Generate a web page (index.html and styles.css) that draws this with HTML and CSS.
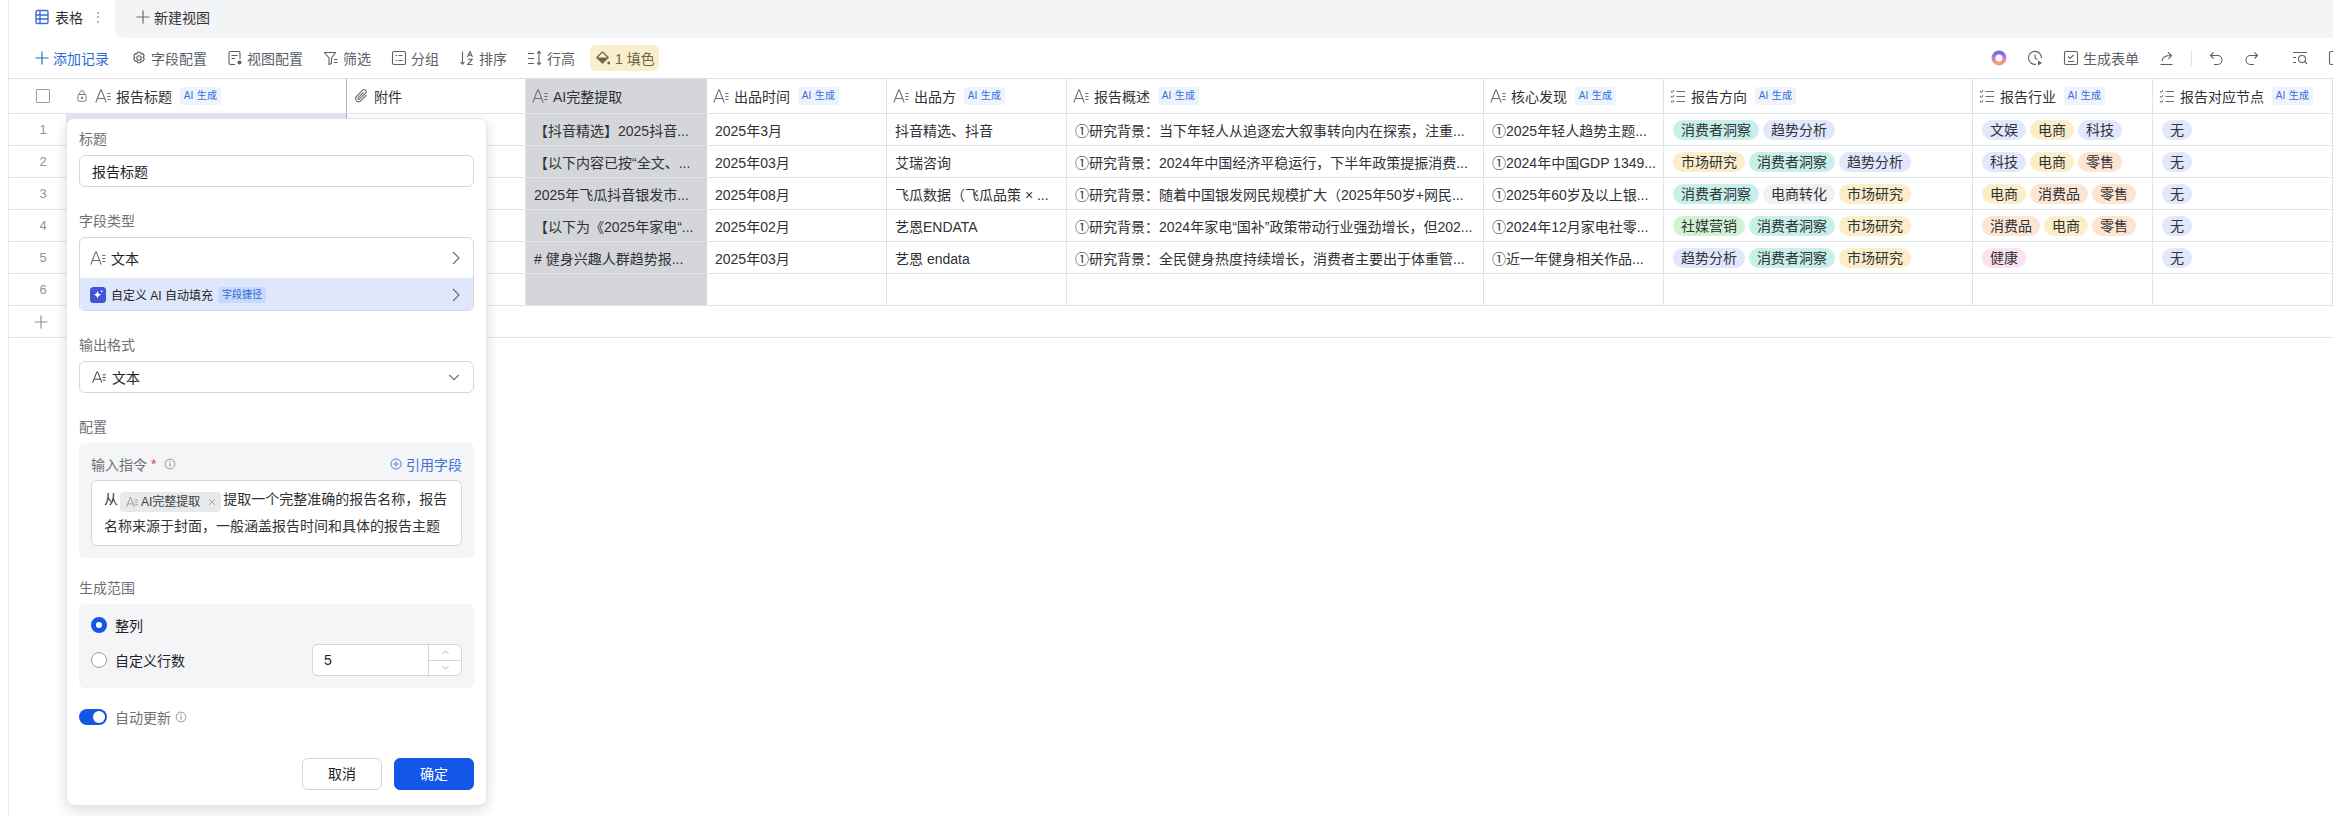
FILE: index.html
```html
<!DOCTYPE html>
<html lang="zh-CN">
<head>
<meta charset="utf-8">
<title>表格</title>
<link rel="stylesheet" href="styles.css">
</head>
<body>
<svg class="defs" xmlns="http://www.w3.org/2000/svg">
  <symbol id="i-text" viewBox="0 0 16 16"><path d="M.8 14.500 5.600 2h.8l4.800 12.500M2.600 10.500h6.800M12.300 5.500h3.200M12.300 8.500h3.200M12.300 11.500h3.200" fill="none" stroke="currentColor" stroke-width="1.100"/></symbol>
  <symbol id="i-multi" viewBox="0 0 16 16"><path d="M6.500 3.500H15M6.500 8.500H15M6.500 13.500H15" fill="none" stroke="currentColor" stroke-width="1.100"/><path d="M1 3.200l1.200 1.200L4.200 2.300M1 8.200l1.200 1.200 2-2.100M1 13.200l1.200 1.200 2-2.100" fill="none" stroke="currentColor" stroke-width="1.100" stroke-dasharray="1.800 .8"/></symbol>
  <symbol id="i-grid" viewBox="0 0 16 16"><rect x="2" y="1.500" width="12" height="13" rx="1.500" fill="none" stroke="currentColor" stroke-width="1.400"/><path d="M6 2v12M2 6h12M2 10h12" stroke="currentColor" stroke-width="1.400"/></symbol>
  <symbol id="i-plus" viewBox="0 0 16 16"><path d="M8 1.500v13M1.500 8h13" stroke="currentColor" stroke-width="1.200" fill="none"/></symbol>
  <symbol id="i-gear" viewBox="0 0 16 16"><path d="M6.600 1.500h2.800l.7 1.700 1.800-.3 1.400 2.400-1.100 1.400 1.100 1.500-1.400 2.400-1.800-.3-.7 1.700H6.600l-.7-1.700-1.800.3-1.400-2.400 1.100-1.500-1.100-1.400 1.400-2.400 1.800.3z" fill="none" stroke="currentColor" stroke-width="1.100" stroke-linejoin="round" transform="translate(0 .7)"/><circle cx="8" cy="8" r="2.200" fill="none" stroke="currentColor" stroke-width="1.100"/></symbol>
  <symbol id="i-view" viewBox="0 0 16 16"><path d="M8 14.500H3.500A1.500 1.500 0 0 1 2 13V3A1.500 1.500 0 0 1 3.500 1.500h8A1.500 1.500 0 0 1 13 3v6M4.500 5.500h6M4.500 8.500h3.500" fill="none" stroke="currentColor" stroke-width="1.100"/><circle cx="12.500" cy="12.500" r="2" fill="currentColor"/></symbol>
  <symbol id="i-filter" viewBox="0 0 16 16"><path d="M1.500 2.500h11L8.500 8v5.500L6 14.500V8zM11 9.500h3.500M11 12.500h3.500" fill="none" stroke="currentColor" stroke-width="1.100" stroke-linejoin="round"/></symbol>
  <symbol id="i-group" viewBox="0 0 16 16"><rect x="1.500" y="1.500" width="13" height="13" rx="1.500" fill="none" stroke="currentColor" stroke-width="1.100"/><path d="M4.500 5.500h1.500M7.500 5.500h4M4.500 10.500h1.500M7.500 10.500h4" fill="none" stroke="currentColor" stroke-width="1.100"/></symbol>
  <symbol id="i-sort" viewBox="0 0 16 16"><path d="M3.500 1.500v12.500M1.500 12l2 2.200 2-2.200M8.500 7l2.500-5.500L13.500 7M9.300 5.300h3.400M8.800 9.200h4.400L8.800 14.500h4.700" fill="none" stroke="currentColor" stroke-width="1.100"/></symbol>
  <symbol id="i-height" viewBox="0 0 16 16"><path d="M1 3.500h6M1 8.500h6M1 13.500h6M12 1.500v13M10 3.500l2-2.200 2 2.200M10 12.500l2 2.200 2-2.200" fill="none" stroke="currentColor" stroke-width="1.100"/></symbol>
  <symbol id="i-fill" viewBox="0 0 16 16"><path d="M7.500 1.800 13.200 7.500 7.500 13.200 1.800 7.500z" fill="none" stroke="currentColor" stroke-width="1.200" stroke-linejoin="round"/><path d="M2.500 7.500h10l-5 5z" fill="currentColor"/><circle cx="13.800" cy="13" r="1.400" fill="currentColor"/></symbol>
  <symbol id="i-clock" viewBox="0 0 16 16"><path d="M9 14.300A6.500 6.500 0 1 1 14.500 8M8 4.500V8l2.500 1.500" fill="none" stroke="currentColor" stroke-width="1.100"/><path d="M11 10.500l4 2.500-4 2.500z" fill="currentColor"/></symbol>
  <symbol id="i-form" viewBox="0 0 16 16"><rect x="1.500" y="1.500" width="13" height="13" rx="1.500" fill="none" stroke="currentColor" stroke-width="1.100"/><path d="M5 6.500l2 2 3.500-3.500M5 11.500h6" fill="none" stroke="currentColor" stroke-width="1.100"/></symbol>
  <symbol id="i-share" viewBox="0 0 16 16"><path d="M1.500 14.500h12M3 11c.5-3.500 3-5.500 8.500-5.500M9 2.500l3.500 3-3 3.500" fill="none" stroke="currentColor" stroke-width="1.100"/></symbol>
  <symbol id="i-undo" viewBox="0 0 16 16"><path d="M3 5.500h6.500a4.500 4.500 0 0 1 0 9H6M5.500 2.300 2.500 5.500l3 3" fill="none" stroke="currentColor" stroke-width="1.100"/></symbol>
  <symbol id="i-redo" viewBox="0 0 16 16"><path d="M13 5.500H6.500a4.500 4.500 0 0 0 0 9H10M10.500 2.300l3 3.200-3 3" fill="none" stroke="currentColor" stroke-width="1.100"/></symbol>
  <symbol id="i-search" viewBox="0 0 16 16"><path d="M1 2.500h14M1 7.500h3M1 12.500h3" fill="none" stroke="currentColor" stroke-width="1.100"/><circle cx="10" cy="9" r="3.500" fill="none" stroke="currentColor" stroke-width="1.100"/><path d="M12.500 11.500l2.500 2.500" stroke="currentColor" stroke-width="1.100"/></symbol>
  <symbol id="i-lock" viewBox="0 0 16 16"><rect x="2.500" y="6" width="11" height="9" rx="1.500" fill="none" stroke="currentColor" stroke-width="1.200"/><path d="M5 6V4a3 3 0 0 1 6 0v2" fill="none" stroke="currentColor" stroke-width="1.200"/><circle cx="8" cy="10.500" r="1.500" fill="currentColor"/></symbol>
  <symbol id="i-clip" viewBox="0 0 16 16"><path d="M13.500 7 7.800 12.800a3 3 0 0 1-4.300-4.300L9.700 2.200a2 2 0 0 1 2.900 2.900L6.500 11.200a1 1 0 0 1-1.400-1.400L10.500 4.500" fill="none" stroke="currentColor" stroke-width="1.100"/></symbol>
  <symbol id="i-right" viewBox="0 0 16 16"><path d="M5 2l6 6-6 6" fill="none" stroke="currentColor" stroke-width="1.100"/></symbol>
  <symbol id="i-down" viewBox="0 0 16 16"><path d="M2.500 5.500 8 11l5.500-5.500" fill="none" stroke="currentColor" stroke-width="1.300"/></symbol>
  <symbol id="i-info" viewBox="0 0 16 16"><circle cx="8" cy="8" r="6.500" fill="none" stroke="currentColor" stroke-width="1.100"/><path d="M8 7v4.500" stroke="currentColor" stroke-width="1.300"/><circle cx="8" cy="4.800" r=".9" fill="currentColor"/></symbol>
  <symbol id="i-add" viewBox="0 0 16 16"><circle cx="8" cy="8" r="6.800" fill="none" stroke="currentColor" stroke-width="1.200"/><path d="M8 4.500v7M4.500 8h7" stroke="currentColor" stroke-width="1.200"/></symbol>
  <symbol id="i-close" viewBox="0 0 12 12"><path d="M2.500 2.500l7 7M9.500 2.500l-7 7" stroke="currentColor" stroke-width="1.100" fill="none"/></symbol>
  <symbol id="i-spark" viewBox="0 0 16 16"><rect width="16" height="16" rx="3.500" fill="#4353d8"/><path d="M7.500 3.500c.4 2.600 1.400 3.700 4 4.200-2.600.5-3.600 1.600-4 4.300-.4-2.700-1.400-3.800-4-4.300 2.600-.5 3.600-1.600 4-4.200z" fill="#fff"/><circle cx="11.800" cy="4.300" r=".9" fill="#fff"/></symbol>
</svg>

<div class="app">
  <div class="tabs">
    <div class="tab-active">
      <svg class="icon icon-blue"><use href="#i-grid"/></svg>
      <span>表格</span>
      <span class="tab-dots">⋮</span>
    </div>
    <div class="tabs-rest">
      <svg class="icon icon-grey"><use href="#i-plus"/></svg>
      <span>新建视图</span>
    </div>
  </div>

  <div class="toolbar">
    <div class="tool tool-add"><svg class="icon"><use href="#i-plus"/></svg><span>添加记录</span></div>
    <div class="tool"><svg class="icon"><use href="#i-gear"/></svg><span>字段配置</span></div>
    <div class="tool"><svg class="icon"><use href="#i-view"/></svg><span>视图配置</span></div>
    <div class="tool"><svg class="icon"><use href="#i-filter"/></svg><span>筛选</span></div>
    <div class="tool"><svg class="icon"><use href="#i-group"/></svg><span>分组</span></div>
    <div class="tool"><svg class="icon"><use href="#i-sort"/></svg><span>排序</span></div>
    <div class="tool"><svg class="icon"><use href="#i-height"/></svg><span>行高</span></div>
    <div class="tool tool-fill"><svg class="icon"><use href="#i-fill"/></svg><span>1 填色</span></div>
    <div class="toolbar-right">
      <svg class="icon" viewBox="0 0 16 16">
        <defs><linearGradient id="ring" x1="0" y1="0" x2="0" y2="1"><stop offset="0" stop-color="#7668ee"/><stop offset=".55" stop-color="#c77fd0"/><stop offset="1" stop-color="#f4a36c"/></linearGradient></defs>
        <circle cx="8" cy="8" r="5.500" fill="none" stroke="url(#ring)" stroke-width="4"/>
      </svg>
      <svg class="icon"><use href="#i-clock"/></svg>
      <div class="tool"><svg class="icon"><use href="#i-form"/></svg><span>生成表单</span></div>
      <svg class="icon"><use href="#i-share"/></svg>
      <span class="tool-divider"></span>
      <svg class="icon"><use href="#i-undo"/></svg>
      <svg class="icon"><use href="#i-redo"/></svg>
      <svg class="icon tool-search"><use href="#i-search"/></svg>
      <svg class="icon"><use href="#i-form"/></svg>
    </div>
  </div>

  <div class="table">
    <div class="row row-head">
      <div class="cell idx"><span class="checkbox"></span></div>
      <div class="cell head first-col"><svg class="icon lock"><use href="#i-lock"/></svg><svg class="icon"><use href="#i-text"/></svg><span>报告标题</span><span class="ai-badge">AI 生成</span></div>
      <div class="cell head"><svg class="icon"><use href="#i-clip"/></svg><span>附件</span></div>
      <div class="cell head ai-col"><svg class="icon"><use href="#i-text"/></svg><span>AI完整提取</span></div>
      <div class="cell head"><svg class="icon"><use href="#i-text"/></svg><span>出品时间</span><span class="ai-badge">AI 生成</span></div>
      <div class="cell head"><svg class="icon"><use href="#i-text"/></svg><span>出品方</span><span class="ai-badge">AI 生成</span></div>
      <div class="cell head"><svg class="icon"><use href="#i-text"/></svg><span>报告概述</span><span class="ai-badge">AI 生成</span></div>
      <div class="cell head"><svg class="icon"><use href="#i-text"/></svg><span>核心发现</span><span class="ai-badge">AI 生成</span></div>
      <div class="cell head"><svg class="icon"><use href="#i-multi"/></svg><span>报告方向</span><span class="ai-badge">AI 生成</span></div>
      <div class="cell head"><svg class="icon"><use href="#i-multi"/></svg><span>报告行业</span><span class="ai-badge">AI 生成</span></div>
      <div class="cell head"><svg class="icon"><use href="#i-multi"/></svg><span>报告对应节点</span><span class="ai-badge">AI 生成</span></div>
    </div>

    <div class="row">
      <div class="cell idx">1</div>
      <div class="cell first-col selected"></div>
      <div class="cell"></div>
      <div class="cell ai-col">【抖音精选】2025抖音...</div>
      <div class="cell">2025年3月</div>
      <div class="cell">抖音精选、抖音</div>
      <div class="cell">①研究背景：当下年轻人从追逐宏大叙事转向内在探索，注重...</div>
      <div class="cell">①2025年轻人趋势主题...</div>
      <div class="cell tags"><span class="tag teal">消费者洞察</span><span class="tag blue">趋势分析</span></div>
      <div class="cell tags"><span class="tag blue">文娱</span><span class="tag yellow">电商</span><span class="tag blue">科技</span></div>
      <div class="cell tags"><span class="tag blue">无</span></div>
    </div>
    <div class="row">
      <div class="cell idx">2</div>
      <div class="cell first-col"></div>
      <div class="cell"></div>
      <div class="cell ai-col">【以下内容已按“全文、...</div>
      <div class="cell">2025年03月</div>
      <div class="cell">艾瑞咨询</div>
      <div class="cell">①研究背景：2024年中国经济平稳运行，下半年政策提振消费...</div>
      <div class="cell">①2024年中国GDP 1349...</div>
      <div class="cell tags"><span class="tag yellow">市场研究</span><span class="tag teal">消费者洞察</span><span class="tag blue">趋势分析</span></div>
      <div class="cell tags"><span class="tag blue">科技</span><span class="tag yellow">电商</span><span class="tag orange">零售</span></div>
      <div class="cell tags"><span class="tag blue">无</span></div>
    </div>
    <div class="row">
      <div class="cell idx">3</div>
      <div class="cell first-col"></div>
      <div class="cell"></div>
      <div class="cell ai-col">2025年飞瓜抖音银发市...</div>
      <div class="cell">2025年08月</div>
      <div class="cell">飞瓜数据（飞瓜品策 × ...</div>
      <div class="cell">①研究背景：随着中国银发网民规模扩大（2025年50岁+网民...</div>
      <div class="cell">①2025年60岁及以上银...</div>
      <div class="cell tags"><span class="tag teal">消费者洞察</span><span class="tag grey">电商转化</span><span class="tag yellow">市场研究</span></div>
      <div class="cell tags"><span class="tag yellow">电商</span><span class="tag orange">消费品</span><span class="tag orange">零售</span></div>
      <div class="cell tags"><span class="tag blue">无</span></div>
    </div>
    <div class="row">
      <div class="cell idx">4</div>
      <div class="cell first-col"></div>
      <div class="cell"></div>
      <div class="cell ai-col">【以下为《2025年家电“...</div>
      <div class="cell">2025年02月</div>
      <div class="cell">艺恩ENDATA</div>
      <div class="cell">①研究背景：2024年家电“国补”政策带动行业强劲增长，但202...</div>
      <div class="cell">①2024年12月家电社零...</div>
      <div class="cell tags"><span class="tag green">社媒营销</span><span class="tag teal">消费者洞察</span><span class="tag yellow">市场研究</span></div>
      <div class="cell tags"><span class="tag orange">消费品</span><span class="tag yellow">电商</span><span class="tag orange">零售</span></div>
      <div class="cell tags"><span class="tag blue">无</span></div>
    </div>
    <div class="row">
      <div class="cell idx">5</div>
      <div class="cell first-col"></div>
      <div class="cell"></div>
      <div class="cell ai-col"># 健身兴趣人群趋势报...</div>
      <div class="cell">2025年03月</div>
      <div class="cell">艺恩 endata</div>
      <div class="cell">①研究背景：全民健身热度持续增长，消费者主要出于体重管...</div>
      <div class="cell">①近一年健身相关作品...</div>
      <div class="cell tags"><span class="tag blue">趋势分析</span><span class="tag teal">消费者洞察</span><span class="tag yellow">市场研究</span></div>
      <div class="cell tags"><span class="tag pink">健康</span></div>
      <div class="cell tags"><span class="tag blue">无</span></div>
    </div>
    <div class="row">
      <div class="cell idx">6</div>
      <div class="cell first-col"></div>
      <div class="cell"></div>
      <div class="cell ai-col"></div>
      <div class="cell"></div>
      <div class="cell"></div>
      <div class="cell"></div>
      <div class="cell"></div>
      <div class="cell"></div>
      <div class="cell"></div>
      <div class="cell"></div>
    </div>
    <div class="add-row"><svg class="icon"><use href="#i-plus"/></svg></div>
  </div>

  <div class="popover">
    <div class="field-label">标题</div>
    <div class="input">报告标题</div>

    <div class="field-label section">字段类型</div>
    <div class="type-group">
      <div class="type-row">
        <svg class="icon"><use href="#i-text"/></svg>
        <span>文本</span>
        <svg class="icon chevron"><use href="#i-right"/></svg>
      </div>
      <div class="type-row type-ai">
        <svg class="icon"><use href="#i-spark"/></svg>
        <span>自定义 AI 自动填充</span>
        <span class="shortcut">字段捷径</span>
        <svg class="icon chevron"><use href="#i-right"/></svg>
      </div>
    </div>

    <div class="field-label section">输出格式</div>
    <div class="input select">
      <svg class="icon"><use href="#i-text"/></svg>
      <span>文本</span>
      <svg class="icon chevron"><use href="#i-down"/></svg>
    </div>

    <div class="field-label section">配置</div>
    <div class="panel panel-prompt">
      <div class="prompt-head">
        <span>输入指令</span>
        <span class="required">*</span>
        <svg class="icon"><use href="#i-info"/></svg>
        <span class="quote"><svg class="icon"><use href="#i-add"/></svg>引用字段</span>
      </div>
      <div class="prompt">从<span class="chip"><svg class="icon"><use href="#i-text"/></svg>AI完整提取<svg class="icon chip-x"><use href="#i-close"/></svg></span>提取一个完整准确的报告名称，报告名称来源于封面，一般涵盖报告时间和具体的报告主题</div>
    </div>

    <div class="field-label section-tight">生成范围</div>
    <div class="panel panel-range">
      <div class="range-row"><span class="radio radio-on"></span><span>整列</span></div>
      <div class="range-row range-custom">
        <span class="radio"></span><span>自定义行数</span>
        <div class="number">
          <span class="number-value">5</span>
          <span class="stepper">
            <span class="step"><svg class="icon up"><use href="#i-down"/></svg></span>
            <span class="step"><svg class="icon"><use href="#i-down"/></svg></span>
          </span>
        </div>
      </div>
    </div>

    <div class="auto-row">
      <span class="toggle"><span class="knob"></span></span>
      <span>自动更新</span>
      <svg class="icon"><use href="#i-info"/></svg>
    </div>

    <div class="footer">
      <span class="btn">取消</span>
      <span class="btn btn-primary">确定</span>
    </div>
  </div>
</div>
</body>
</html>
```
FILE: styles.css
```css
* { box-sizing: border-box; }
html, body { margin: 0; height: 100%; background: #fff; overflow: hidden; }
body {
  font-family: "Liberation Sans", "Noto Sans CJK SC", sans-serif;
  font-size: 14px;
  color: #2f3237;
}
.defs { display: none; }
.icon { width: 16px; height: 16px; flex: none; display: block; }

.app {
  position: relative;
  margin-left: 8px;
  height: 816px;
  border-left: 1px solid #e9eaec;
}

/* tabs */
.tabs { display: flex; height: 38px; }
.tab-active {
  width: 106px;
  padding: 0 0 4px 25px;
  display: flex;
  align-items: center;
  gap: 5px;
}
.tab-dots { margin-left: 3px; color: #a0a4aa; }
.icon-blue { color: #3b6fd4; }
.icon-grey { color: #666a70; }
.tabs-rest {
  flex: 1;
  display: flex;
  align-items: center;
  gap: 3px;
  padding: 0 0 4px 20px;
  background: #f3f4f6;
  border-bottom-left-radius: 8px;
}

/* toolbar */
.toolbar {
  display: flex;
  align-items: center;
  gap: 20px;
  height: 40px;
  padding-left: 25px;
  color: #5c6066;
}
.tool { display: flex; align-items: center; gap: 4px; white-space: nowrap; }
.tool-add { color: #2b6ad0; gap: 3px; margin-right: 2px; }
.tool-fill {
  height: 26px;
  margin-left: -5px;
  padding: 0 4px 0 5px;
  border-radius: 6px;
  background: #fbeecb;
  color: #6b6250;
}
.toolbar-right {
  display: flex;
  align-items: center;
  gap: 20px;
  margin-left: auto;
  margin-right: -11px;
}
.tool-divider { width: 1px; height: 16px; margin: 0 -4px; background: #dfe1e4; }
.tool-search { margin-left: 12px; }

/* table */
.table { border-top: 1px solid #dfe1e4; }
.row {
  display: grid;
  grid-template-columns: 57px 281px 179px 181px 180px 180px 417px 180px 309px 180px 1fr;
  height: 32px;
  border-bottom: 1px solid #e1e3e6;
}
.row-head { height: 35px; }
.cell {
  display: flex;
  align-items: center;
  min-width: 0;
  padding-left: 8px;
  border-right: 1px solid #e1e3e6;
  white-space: nowrap;
  overflow: hidden;
}
.idx {
  justify-content: center;
  padding: 0 0 0 11px;
  border-right: 0;
  color: #8f949b;
  font-size: 13px;
}
.checkbox {
  width: 14px;
  height: 14px;
  border: 1.5px solid #999ca1;
  border-radius: 1px;
}
.head { padding-left: 6px; gap: 5px; }
.head .icon { color: #6d7076; }
.lock { width: 12px; height: 14px; margin-right: 2px; }
.first-col { border-right-color: #aab0bd; padding-left: 10px; }
.selected { background: #e3e7f7; }
.ai-col { background: #d4d6d9; border-right: 0; }
.ai-badge {
  width: 41px;
  height: 18px;
  margin-left: 3px;
  flex: none;
  border-radius: 3px;
  background: #eef3fd;
  color: #3170d8;
  font-size: 10px;
  letter-spacing: .3px;
  line-height: 18px;
  text-align: center;
}
.tags { gap: 4px; padding-left: 9px; }
.tag {
  height: 20px;
  padding: 0 8px;
  border-radius: 10px;
  line-height: 20px;
  flex: none;
}
.teal { background: #c6f0e8; }
.blue { background: #e2e7fb; }
.yellow { background: #fbeec9; }
.orange { background: #fde5d3; }
.grey { background: #f0f1f3; }
.green { background: #d3f2d4; }
.pink { background: #fbe2ee; }
.add-row {
  height: 32px;
  padding-left: 24px;
  display: flex;
  align-items: center;
  border-bottom: 1px solid #e1e3e6;
  color: #8f949b;
}

/* popover */
.popover {
  position: absolute;
  left: 57px;
  top: 118px;
  width: 421px;
  height: 688px;
  padding: 10px 12px 0;
  border: 1px solid #e4e5e8;
  border-radius: 8px;
  background: #fff;
  box-shadow: 0 4px 14px rgba(0, 0, 0, .14);
  z-index: 2;
}
.field-label {
  height: 20px;
  margin-bottom: 6px;
  line-height: 20px;
  color: #6e7176;
}
.section { margin-top: 24px; }
.section-tight { margin-top: 20px; }
.input {
  display: flex;
  align-items: center;
  height: 32px;
  padding: 0 12px;
  border: 1px solid #d4d6da;
  border-radius: 6px;
  color: #1f2329;
}
.select { gap: 6px; }
.select .icon { width: 14px; height: 14px; color: #33363b; }
.select .chevron { margin-left: auto; color: #666a70; }
.type-group {
  height: 74px;
  border: 1px solid #d4d6da;
  border-radius: 6px;
  overflow: hidden;
}
.type-row {
  display: flex;
  align-items: center;
  gap: 5px;
  height: 40px;
  padding: 0 9px 0 10px;
  color: #1f2329;
}
.type-row > .icon:first-child { color: #6d7076; }
.chevron { margin-left: auto; color: #666a70; }
.type-ai {
  height: 33px;
  background: #dfe8fb;
  font-size: 12px;
}
.shortcut {
  width: 48px;
  height: 16px;
  border-radius: 3px;
  background: #c8d9fb;
  color: #2a6bd8;
  font-size: 10px;
  line-height: 16px;
  text-align: center;
}
.panel { border-radius: 6px; background: #f3f5f7; padding: 0 12px; }
.panel-prompt { height: 115px; padding-top: 11px; }
.prompt-head {
  display: flex;
  align-items: center;
  height: 20px;
  margin-bottom: 6px;
  color: #6e7176;
}
.prompt-head .icon { width: 12px; height: 12px; margin-left: 8px; color: #808389; }
.required { margin-left: 4px; color: #d64b4b; }
.quote {
  display: flex;
  align-items: center;
  gap: 4px;
  margin-left: auto;
  color: #3d72d6;
}
.prompt-head .quote .icon { margin-left: 0; color: #3d72d6; }
.prompt {
  height: 66px;
  padding: 5px 12px;
  border: 1px solid #d4d6da;
  border-radius: 6px;
  background: #fff;
  line-height: 27px;
}
.chip {
  display: inline-flex;
  align-items: center;
  height: 20px;
  margin: 0 2px;
  padding: 0 4px 0 6px;
  gap: 3px;
  border-radius: 4px;
  background: #e8e9eb;
  font-size: 12px;
  line-height: 20px;
  vertical-align: -4px;
  color: #3a3d42;
}
.chip .icon { width: 12px; height: 12px; color: #8b8e94; }
.chip .chip-x { margin-left: 4px; width: 10px; height: 10px; color: #999ca1; }

.panel-range { height: 84px; padding-top: 11px; color: #1f2329; }
.range-row { display: flex; align-items: center; gap: 8px; height: 20px; }
.range-custom { height: 32px; margin-top: 9px; }
.radio {
  width: 16px;
  height: 16px;
  flex: none;
  border: 1px solid #9a9da3;
  border-radius: 50%;
  background: #fff;
}
.radio-on { border: 5px solid #1456e6; }
.number {
  display: flex;
  width: 150px;
  height: 32px;
  margin-left: auto;
  border: 1px solid #d4d6da;
  border-radius: 6px;
  background: #fff;
  overflow: hidden;
}
.number-value { flex: 1; padding-left: 11px; line-height: 30px; }
.stepper { display: flex; flex-direction: column; width: 33px; border-left: 1px solid #d4d6da; }
.step {
  flex: 1;
  display: flex;
  align-items: center;
  justify-content: center;
  color: #8b8e94;
}
.step + .step { border-top: 1px solid #d4d6da; }
.step .icon { width: 9px; height: 9px; }
.step .up { transform: rotate(180deg); }

.auto-row {
  display: flex;
  align-items: center;
  gap: 8px;
  height: 16px;
  margin-top: 21px;
  color: #6e7176;
}
.auto-row > .icon { width: 12px; height: 12px; margin-left: -4px; color: #808389; }
.toggle {
  display: flex;
  justify-content: flex-end;
  align-items: center;
  width: 28px;
  height: 16px;
  padding-right: 2px;
  border-radius: 8px;
  background: #1456e6;
}
.knob { width: 12px; height: 12px; border-radius: 50%; background: #fff; }
.footer { display: flex; justify-content: flex-end; gap: 12px; margin-top: 33px; }
.btn {
  width: 80px;
  height: 32px;
  border: 1px solid #d4d6da;
  border-radius: 6px;
  line-height: 30px;
  text-align: center;
  color: #1f2329;
}
.btn-primary { border-color: #1456e6; background: #1456e6; color: #fff; }
```
